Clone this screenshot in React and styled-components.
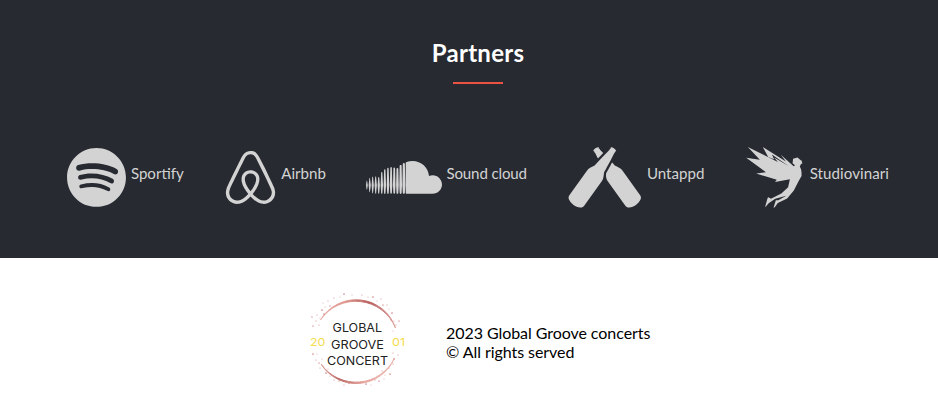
import React from "react";
import styled, { createGlobalStyle } from "styled-components";
import { FaSpotify, FaAirbnb, FaSoundcloud, FaUntappd, FaStudiovinari } from "react-icons/fa";

const GlobalStyle = createGlobalStyle`
  * { box-sizing: border-box; }
  body { margin: 0; background: #fff; font-family: Lato, sans-serif; }
`;

const PartnersSection = styled.section`
  display: flex;
  flex-direction: column;
  align-items: center;
  height: 258px;
  padding: 38px 0 0 18px;
  background: #272a31;
`;

const Title = styled.h2`
  margin: 0;
  color: #fff;
  font-size: 24px;
  font-weight: 700;
  line-height: 29px;
  letter-spacing: 0.25px;
`;

const Underline = styled.span`
  width: 50px;
  height: 2px;
  margin: 15px 0 63px;
  background: #ec5242;
`;

const PartnerList = styled.ul`
  display: flex;
  gap: 39.9px;
  width: 100%;
  margin: 0;
  padding: 0 0 0 49.3px;
  list-style: none;
`;

const Partner = styled.li`
  display: flex;
  gap: 4.6px;
  color: #d3d3d3;
  font-size: 15.1px;
  line-height: 19px;
  letter-spacing: ${({ $tracking }) => $tracking || 0}px;
  white-space: nowrap;

  svg {
    flex: none;
    width: ${({ $iconWidth }) => $iconWidth}px;
    height: 60.8px;
  }
`;

const PartnerName = styled.span`
  padding-top: 16.5px;
`;

const Footer = styled.footer`
  display: flex;
  align-items: center;
  gap: 38px;
  height: 148px;
  padding: 16px 0 0 308px;
`;

const Logo = styled.svg`
  flex: none;
  width: 100px;
  height: 100px;
  overflow: visible;
`;

const LogoWord = styled.text`
  fill: #222;
  font-family: Inter, sans-serif;
  font-size: 12px;
  font-weight: 400;
`;

const LogoYear = styled.text`
  fill: #f5dc4c;
  font-family: Inter, sans-serif;
  font-size: 11px;
`;

const Copyright = styled.p`
  margin: 0;
  padding-top: 4px;
  color: #000;
  font-size: 16px;
  line-height: 19px;
  letter-spacing: -0.06px;
`;

const partners = [
  { name: "Sportify", Icon: FaSpotify, width: 59 },
  { name: "Airbnb", Icon: FaAirbnb, width: 53 },
  { name: "Sound cloud", Icon: FaSoundcloud, width: 76, tracking: -0.14 },
  { name: "Untappd", Icon: FaUntappd, width: 75.5 },
  { name: "Studiovinari", Icon: FaStudiovinari, width: 60.8, tracking: 0.06 },
];

const logoDots = [
  [14, 20], [12, 28], [8, 31], [5, 36], [9, 25], [17, 17], [16, 24], [15, 13],
  [20, 11], [22, 16], [26, 8], [32, 7], [36, 4], [44, 5], [11, 35], [4, 27],
  [54, 5], [60, 7], [65, 7], [69, 11], [73, 9], [75, 15], [79, 15], [81, 19],
  [84, 23], [86, 31], [88, 35], [91, 31], [83, 30], [85, 41],
  [5, 64], [9, 64], [8, 70], [11, 73], [12, 78], [15, 76], [18, 83], [22, 86],
  [26, 90], [31, 91], [36, 95], [14, 69], [41, 93], [20, 79],
  [90, 65], [86, 69], [85, 74], [81, 78], [82, 84], [77, 85], [74, 81],
  [71, 91], [67, 90], [63, 95], [58, 94], [76, 89], [85, 63],
];

function GrooveLogo() {
  return (
    <Logo viewBox="0 0 100 100" role="img" aria-label="Global Groove Concert 2001">
      <defs>
        <linearGradient id="topArc">
          <stop offset="0" stopColor="#e9afa7" />
          <stop offset="0.35" stopColor="#dc948b" />
          <stop offset="0.65" stopColor="#b75f5d" />
          <stop offset="1" stopColor="#dda09b" />
        </linearGradient>
        <linearGradient id="bottomArc">
          <stop offset="0" stopColor="#dda09b" />
          <stop offset="0.25" stopColor="#bb6563" />
          <stop offset="0.6" stopColor="#e7a49b" />
          <stop offset="1" stopColor="#e9b7b0" />
        </linearGradient>
      </defs>
      <path
        d="M12.5 30 A41.5 41.5 0 0 1 87.5 38 A42.8 42.8 0 0 0 12.5 30Z"
        fill="url(#topArc)"
        stroke="url(#topArc)"
        strokeWidth="0.9"
      />
      <path
        d="M13 74 A41.5 41.5 0 0 0 86.5 68 A42.8 42.8 0 0 1 13 74Z"
        fill="url(#bottomArc)"
        stroke="url(#bottomArc)"
        strokeWidth="0.9"
      />
      {logoDots.map(([x, y], i) => (
        <circle
          key={i}
          cx={x}
          cy={y}
          r={i % 3 ? 0.6 : 0.85}
          fill="#cf7f7c"
          opacity={i % 2 ? 0.65 : 0.9}
        />
      ))}
      <LogoWord x="24.6" y="42" textLength="49.4" lengthAdjust="spacingAndGlyphs">GLOBAL</LogoWord>
      <LogoWord x="23" y="58.5" textLength="53" lengthAdjust="spacingAndGlyphs">GROOVE</LogoWord>
      <LogoWord x="19" y="75" textLength="61" lengthAdjust="spacingAndGlyphs">CONCERT</LogoWord>
      <LogoYear x="2" y="55.5" textLength="15.5" lengthAdjust="spacingAndGlyphs">20</LogoYear>
      <LogoYear x="84" y="55.5" textLength="13" lengthAdjust="spacingAndGlyphs">01</LogoYear>
    </Logo>
  );
}

export default function App() {
  return (
    <>
      <GlobalStyle />
      <PartnersSection>
        <Title>Partners</Title>
        <Underline />
        <PartnerList>
          {partners.map(({ name, Icon, width, tracking }) => (
            <Partner key={name} $iconWidth={width} $tracking={tracking}>
              <Icon />
              <PartnerName>{name}</PartnerName>
            </Partner>
          ))}
        </PartnerList>
      </PartnersSection>
      <Footer>
        <GrooveLogo />
        <Copyright>
          2023 Global Groove concerts
          <br />© All rights served
        </Copyright>
      </Footer>
    </>
  );
}
